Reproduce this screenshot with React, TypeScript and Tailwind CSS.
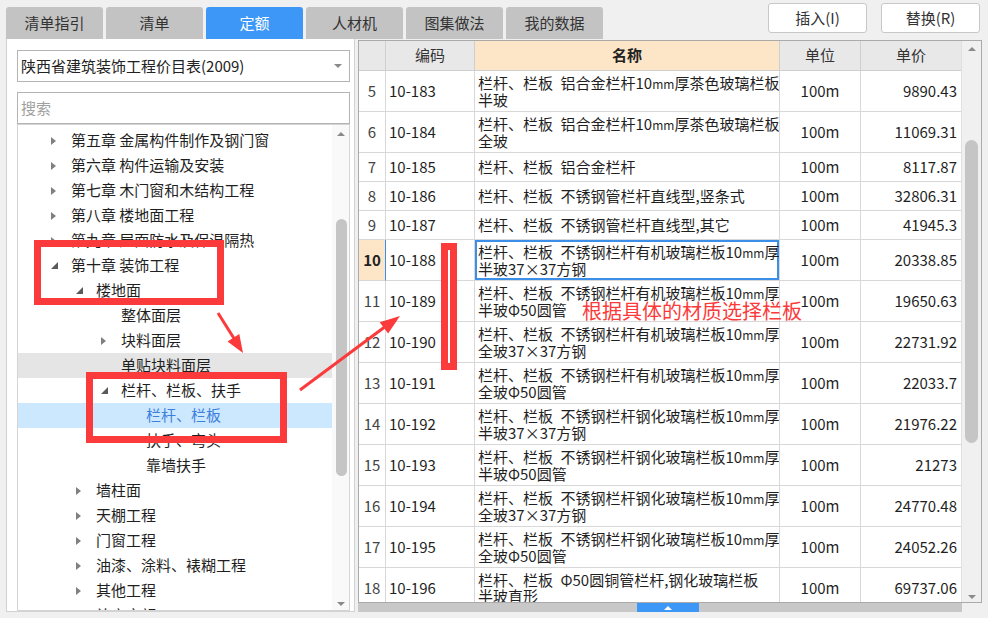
import React from 'react';

type TreeNode = {
  label: string;
  level: number;
  arrow?: 'open' | 'closed';
  state?: 'hover' | 'selected';
};

type Row = {
  n: number;
  code: string;
  name: string[];
  price: string;
};

const tabs = ['清单指引', '清单', '定额', '人材机', '图集做法', '我的数据'];

const tree: TreeNode[] = [
  { label: '第五章 金属构件制作及钢门窗', level: 0, arrow: 'closed' },
  { label: '第六章 构件运输及安装', level: 0, arrow: 'closed' },
  { label: '第七章 木门窗和木结构工程', level: 0, arrow: 'closed' },
  { label: '第八章 楼地面工程', level: 0, arrow: 'closed' },
  { label: '第九章 屋面防水及保温隔热', level: 0, arrow: 'closed' },
  { label: '第十章 装饰工程', level: 0, arrow: 'open' },
  { label: '楼地面', level: 1, arrow: 'open' },
  { label: '整体面层', level: 2 },
  { label: '块料面层', level: 2, arrow: 'closed' },
  { label: '单贴块料面层', level: 2, state: 'hover' },
  { label: '栏杆、栏板、扶手', level: 2, arrow: 'open' },
  { label: '栏杆、栏板', level: 3, state: 'selected' },
  { label: '扶手、弯头', level: 3 },
  { label: '靠墙扶手', level: 3 },
  { label: '墙柱面', level: 1, arrow: 'closed' },
  { label: '天棚工程', level: 1, arrow: 'closed' },
  { label: '门窗工程', level: 1, arrow: 'closed' },
  { label: '油漆、涂料、裱糊工程', level: 1, arrow: 'closed' },
  { label: '其他工程', level: 1, arrow: 'closed' },
  { label: '补充定额', level: 1, arrow: 'closed' },
];

const indent = ['pl-[31px]', 'pl-[56px]', 'pl-[81px]', 'pl-[106px]'];

// en space between the section and the item, like the reference
const A = '栏杆、栏板\u2002不锈钢栏杆有机玻璃栏板10mm厚';
const B = '栏杆、栏板\u2002不锈钢栏杆钢化玻璃栏板10mm厚';

const rows: Row[] = [
  { n: 5, code: '10-183', name: ['栏杆、栏板\u2002铝合金栏杆10mm厚茶色玻璃栏板', '半玻'], price: '9890.43' },
  { n: 6, code: '10-184', name: ['栏杆、栏板\u2002铝合金栏杆10mm厚茶色玻璃栏板', '全玻'], price: '11069.31' },
  { n: 7, code: '10-185', name: ['栏杆、栏板\u2002铝合金栏杆'], price: '8117.87' },
  { n: 8, code: '10-186', name: ['栏杆、栏板\u2002不锈钢管栏杆直线型,竖条式'], price: '32806.31' },
  { n: 9, code: '10-187', name: ['栏杆、栏板\u2002不锈钢管栏杆直线型,其它'], price: '41945.3' },
  { n: 10, code: '10-188', name: [A, '半玻37×37方钢'], price: '20338.85' },
  { n: 11, code: '10-189', name: [A, '半玻Φ50圆管'], price: '19650.63' },
  { n: 12, code: '10-190', name: [A, '全玻37×37方钢'], price: '22731.92' },
  { n: 13, code: '10-191', name: [A, '全玻Φ50圆管'], price: '22033.7' },
  { n: 14, code: '10-192', name: [B, '半玻37×37方钢'], price: '21976.22' },
  { n: 15, code: '10-193', name: [B, '半玻Φ50圆管'], price: '21273' },
  { n: 16, code: '10-194', name: [B, '全玻37×37方钢'], price: '24770.48' },
  { n: 17, code: '10-195', name: [B, '全玻Φ50圆管'], price: '24052.26' },
  { n: 18, code: '10-196', name: ['栏杆、栏板\u2002Φ50圆铜管栏杆,钢化玻璃栏板', '半玻直形'], price: '69737.06' },
];

const Arrow = ({ kind }: { kind?: 'open' | 'closed' }) => {
  if (kind === 'closed')
    return <div className="ml-[2px] h-0 w-0 border-y-[4px] border-l-[5px] border-y-transparent border-l-[#808080]" />;
  if (kind === 'open')
    return <div className="ml-[2px] h-0 w-0 border-b-[7px] border-l-[7px] border-b-[#5a5a5a] border-l-transparent" />;
  return null;
};

const UpTri = ({ color = 'border-b-[#8a8a8a]' }: { color?: string }) => (
  <div className={`h-0 w-0 border-x-[4px] border-b-[4px] border-x-transparent ${color}`} />
);
const DownTri = () => <div className="h-0 w-0 border-x-[4px] border-t-[4px] border-x-transparent border-t-[#8a8a8a]" />;

// the "mm" of the old grid font is a small glyph
const NameLine = ({ text }: { text: string }) => {
  const parts = text.split('mm');
  return (
    <div className="whitespace-nowrap">
      {parts.map((p, i) => (
        <React.Fragment key={i}>
          {p}
          {i < parts.length - 1 && <span className="text-[12px]">mm</span>}
        </React.Fragment>
      ))}
    </div>
  );
};

const App: React.FC = () => {
  return (
    <div className="relative h-[618px] w-[988px] overflow-hidden bg-[#f0f0f0] font-['Noto_Sans_CJK_SC',sans-serif] text-[#1f1f1f]">
      {/* Top bar: tabs + buttons */}
      <div className="flex h-[39px] justify-between">
        <div className="flex items-end gap-[3px] pl-[6px]">
          {tabs.map((t) => (
            <div
              key={t}
              className={`flex h-[32px] w-[97px] items-center justify-center rounded-t-[3px] text-[15px] ${
                t === '定额' ? 'bg-[#3d97f6] text-white' : 'bg-[#c3c3c3] text-[#333]'
              }`}
            >
              {t}
            </div>
          ))}
        </div>
        <div className="flex gap-[14px] pr-[8px] pt-[3px]">
          <button className="h-[30px] w-[99px] rounded-[3px] border border-[#c8c8c8] bg-white text-[15px] text-[#333]">插入(I)</button>
          <button className="h-[30px] w-[99px] rounded-[3px] border border-[#c8c8c8] bg-white text-[15px] text-[#333]">替换(R)</button>
        </div>
      </div>

      <div className="flex h-[579px]">
        {/* Left panel */}
        <div className="ml-[6px] flex h-[573px] w-[349px] flex-col border-x border-b border-[#d2d2d2] bg-white pl-[10px] pr-[4px] pt-[11px]">
          <div className="flex h-[32px] items-center justify-between border border-[#b4b4b4] pl-[3px] pr-[7px] text-[15px] text-[#222]">
            <span>陕西省建筑装饰工程价目表(2009)</span>
            <DownTri />
          </div>
          <div className="mt-[10px] flex h-[32px] items-center border border-[#b4b4b4] pl-[3px] text-[15px] text-[#a0a0a0]">搜索</div>
          <div className="flex h-[487px] border border-[#d4d4d4]">
            <div className="flex-1 overflow-hidden pt-[3px]">
              {tree.map((n) => (
                <div
                  key={n.label}
                  className={`flex h-[25px] items-center whitespace-nowrap text-[15px] ${indent[n.level]} ${
                    n.state === 'hover' ? 'bg-[#e5e5e5]' : n.state === 'selected' ? 'bg-[#cce8ff] text-[#3c7fdc]' : ''
                  }`}
                >
                  <div className="flex w-[22px] items-center">
                    <Arrow kind={n.arrow} />
                  </div>
                  <span>{n.label}</span>
                </div>
              ))}
            </div>
            <div className="relative w-[17px] bg-[#f9f9f9]">
              <div className="absolute left-[5px] top-[7px]">
                <UpTri />
              </div>
              <div className="absolute left-[4px] top-[94px] h-[257px] w-[11px] rounded-full bg-[#c5c5c5]" />
              <div className="absolute left-[5px] top-[477px]">
                <DownTri />
              </div>
            </div>
          </div>
        </div>

        {/* Right: quota table */}
        <div className="ml-[3px] mt-[1px] flex w-[624px] flex-col">
          <div className="flex h-[563px] border border-[#aaaaaa] bg-white">
            <div className="w-[602px] overflow-hidden text-[15px]">
              <div className="flex h-[30px] bg-[#e8e8e8] text-[#333]">
                <div className="w-[27px] border-b border-r border-[#cfcfcf]" />
                <div className="flex w-[89px] items-center justify-center border-b border-r border-[#cfcfcf]">编码</div>
                <div className="flex w-[305px] items-center justify-center border-b border-r border-[#cfcfcf] bg-[#fde6c8] font-bold text-[#222]">名称</div>
                <div className="flex w-[81px] items-center justify-center border-b border-r border-[#cfcfcf]">单位</div>
                <div className="flex w-[100px] items-center justify-center border-b border-[#cfcfcf]">单价</div>
              </div>
              {rows.map((r) => {
                const sel = r.n === 10;
                return (
                  <div key={r.n} className={`flex ${r.name.length > 1 ? 'h-[41px]' : 'h-[29px]'}`}>
                    <div
                      className={`flex w-[27px] items-center justify-center border-b border-r ${
                        sel ? 'border-b-[#d8d8d8] border-r-[#3c8fe8] bg-[#fde6c8] font-bold text-[#222]' : 'border-[#d8d8d8] text-[#444]'
                      }`}
                    >
                      {r.n}
                    </div>
                    <div className="flex w-[89px] items-center border-b border-r border-[#d8d8d8] pl-[3px]">{r.code}</div>
                    <div
                      className={`flex w-[305px] flex-col justify-center overflow-hidden border-b border-r border-[#d8d8d8] pl-[3px] leading-[16px] ${
                        sel ? 'shadow-[inset_0_0_0_2px_#3c8fe8]' : ''
                      }`}
                    >
                      {r.name.map((l) => (
                        <NameLine key={l} text={l} />
                      ))}
                    </div>
                    <div className="flex w-[81px] items-center justify-center border-b border-r border-[#d8d8d8]">100m</div>
                    <div className="flex w-[100px] items-center justify-end border-b border-[#d8d8d8] pr-[4px]">{r.price}</div>
                  </div>
                );
              })}
            </div>
            <div className="relative w-[20px] border-l border-[#e0e0e0] bg-[#f0f0f0]">
              <div className="absolute left-[6px] top-[6px]">
                <UpTri />
              </div>
              <div className="absolute left-[3px] top-[99px] h-[303px] w-[13px] rounded-full bg-[#c5c5c5]" />
              <div className="absolute left-[6px] top-[554px]">
                <DownTri />
              </div>
            </div>
          </div>
          <div className="flex h-[9px] w-[604px] justify-center bg-[#c8c8c8] pl-[16px]">
            <div className="flex h-[9px] w-[62px] items-center justify-center bg-[#3d97f6]">
              <UpTri color="border-b-white" />
            </div>
          </div>
        </div>
      </div>

      {/* Annotations */}
      <div className="pointer-events-none absolute left-[34px] top-[240px] h-[65px] w-[190px] border-[7px] border-[#fb3b3b]" />
      <div className="pointer-events-none absolute left-[86px] top-[372px] h-[71px] w-[201px] border-[7px] border-[#fb3b3b]" />
      <div className="pointer-events-none absolute left-[441px] top-[243px] h-[127px] w-[16px] border-[7px] border-[#fb3b3b] bg-white" />
      <div className="pointer-events-none absolute left-[582px] top-[299px] whitespace-nowrap text-[20px] leading-[24px] text-[#fb3b3b]">
        根据具体的材质选择栏板
      </div>
      <svg className="pointer-events-none absolute left-0 top-0" width="988" height="618" viewBox="0 0 988 618">
        <line x1="218" y1="313" x2="235" y2="340" stroke="#fb3b3b" strokeWidth="3" />
        <polygon points="243,353 227.5,341.4 239.3,334" fill="#fb3b3b" />
        <line x1="300" y1="390" x2="386" y2="326" stroke="#fb3b3b" strokeWidth="3" />
        <polygon points="400,316 388.1,333.5 379.7,322.3" fill="#fb3b3b" />
      </svg>
    </div>
  );
};

export default App;
